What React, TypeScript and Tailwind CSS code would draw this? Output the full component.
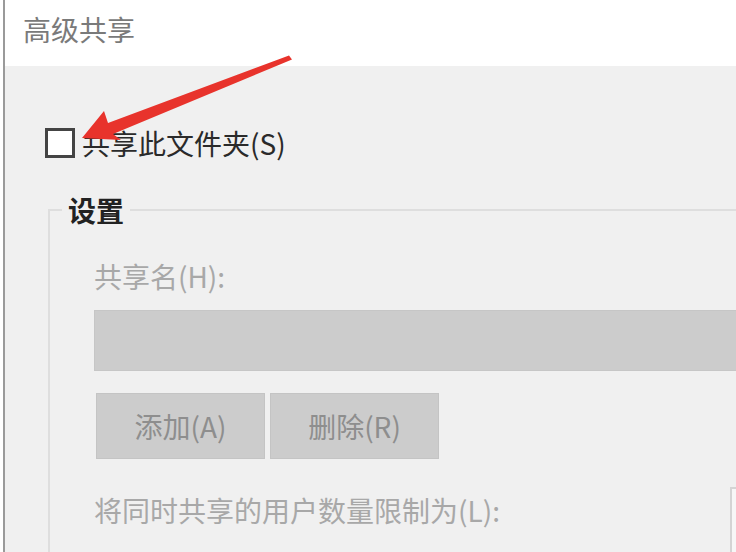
export default function App() {
  const font = { fontFamily: '"Noto Sans CJK SC", "Noto Sans", sans-serif' };

  return (
    <div
      className="relative w-[736px] h-[552px] overflow-hidden bg-white flex"
      style={font}
    >
      {/* window edge */}
      <div className="w-[3px] shrink-0 bg-white" />
      <div className="w-[2px] shrink-0 bg-[#9a9a9a]" />

      <div className="flex-1 min-w-0 flex flex-col">
        {/* title bar */}
        <div className="h-[66px] shrink-0 bg-white flex items-center pl-[18px] pb-[8px]">
          <span className="text-[28px] leading-[32px] text-[#7a7a7a]">高级共享</span>
        </div>

        {/* body */}
        <div className="flex-1 bg-[#f0f0f0] pt-[61px]">
          <label className="flex items-center ml-[40px] h-[32px]">
            <span className="w-[30px] h-[30px] shrink-0 border-[3px] border-[#444] bg-white" />
            <span className="ml-[7px] text-[28px] leading-[32px] text-[#2a2a2a]">
              共享此文件夹(S)
            </span>
          </label>

          <fieldset className="mt-[35px] ml-[43px] w-[760px] border-2 border-[#dedede] p-0">
            <legend className="ml-[12px] px-[6px] text-[28px] leading-[32px] font-bold text-[#222]">
              设置
            </legend>

            <div className="pl-[44px] pb-[40px]">
              <div className="mt-[34px] text-[28px] leading-[32px] text-[#a8a8a8]">共享名(H):</div>

              <div className="mt-[18px] h-[61px] w-[700px] bg-[#cccccc] border border-[#c6c6c6]" />

              <div className="mt-[22px] flex gap-[5px] ml-[2px]">
                <div className="w-[169px] h-[66px] bg-[#cccccc] border border-[#c4c4c4] flex items-center justify-center text-[28px] text-[#8e8e8e]">
                  添加(A)
                </div>
                <div className="w-[169px] h-[66px] bg-[#cccccc] border border-[#c4c4c4] flex items-center justify-center text-[28px] text-[#8e8e8e]">
                  删除(R)
                </div>
              </div>

              <div className="mt-[28px] flex items-start">
                <div className="w-[636px] shrink-0 pt-[7px] text-[28px] leading-[32px] text-[#a8a8a8]">
                  将同时共享的用户数量限制为(L):
                </div>
                <div className="w-[60px] h-[70px] shrink-0 bg-[#f7f7f7] border-2 border-[#d4d4d4]" />
              </div>
            </div>
          </fieldset>
        </div>
      </div>

      {/* annotation arrow */}
      <svg
        className="absolute left-0 top-0 pointer-events-none"
        width="736"
        height="552"
        viewBox="0 0 736 552"
      >
        <polygon
          points="82,138 121,140 113,134 292,59.5 289,55.5 108,123 104,111"
          fill="#e8332c"
        />
      </svg>
    </div>
  );
}
